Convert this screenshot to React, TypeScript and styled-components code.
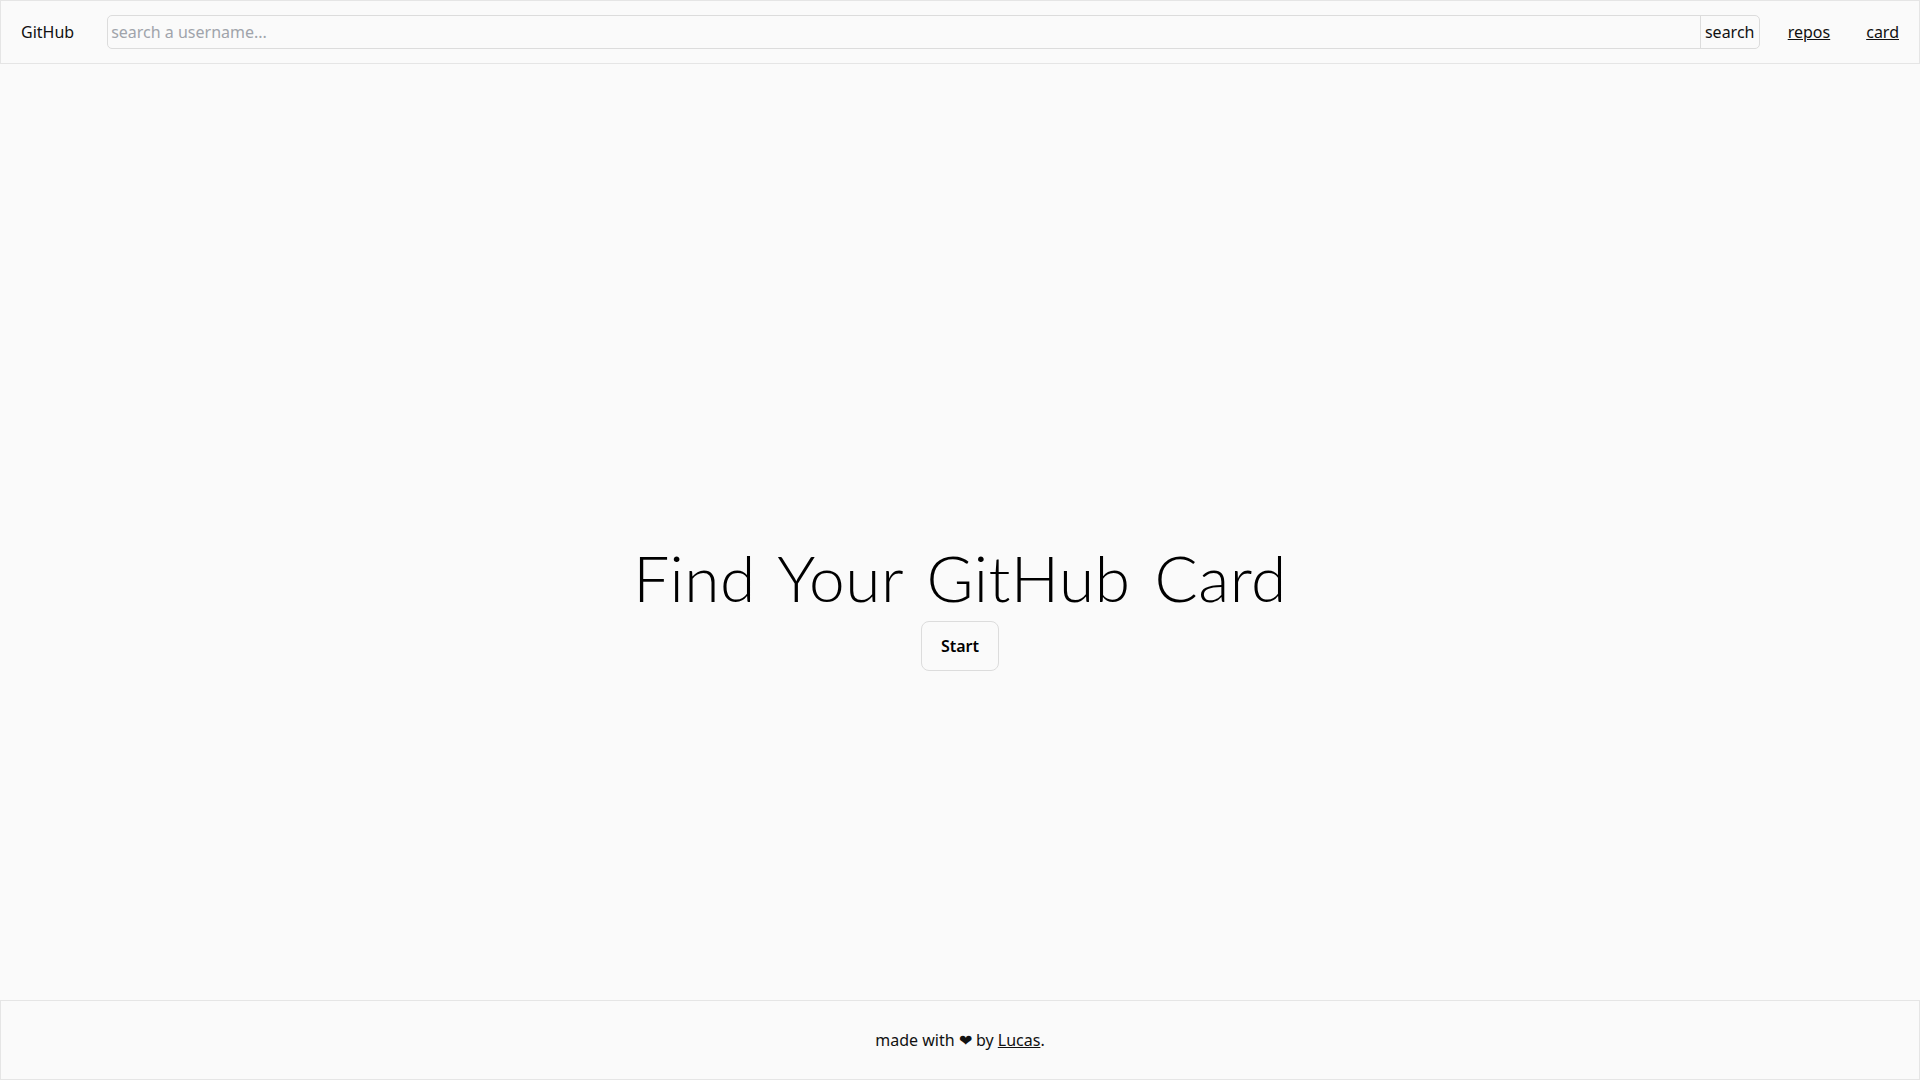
import React, { useState } from 'react';
import styled, { createGlobalStyle } from 'styled-components';

const GlobalStyle = createGlobalStyle`
  html, body {
    margin: 0;
    padding: 0;
    background: #fafafa;
    font-family: 'Noto Sans', 'Open Sans', sans-serif;
    color: #111;
  }
  * {
    box-sizing: border-box;
  }
`;

const Page = styled.div`
  display: flex;
  flex-direction: column;
  min-height: 100vh;
`;

const Header = styled.header`
  display: flex;
  align-items: center;
  height: 64px;
  padding: 0 20px;
  border: 1px solid #e5e5e5;
`;

const Brand = styled.span`
  font-size: 16px;
  margin-right: 33px;
`;

const SearchForm = styled.form`
  flex: 1;
  display: flex;
  height: 34px;
  border: 1px solid #dcdcdc;
  border-radius: 5px;
  overflow: hidden;
`;

const SearchInput = styled.input`
  flex: 1;
  border: none;
  background: transparent;
  padding: 0 3px;
  font-family: inherit;
  font-size: 16px;
  color: #111;
  outline: none;

  &::placeholder {
    color: #a0a4ab;
  }
`;

const SearchButton = styled.button`
  width: 59px;
  border: none;
  border-left: 1px solid #dcdcdc;
  background: transparent;
  font-family: inherit;
  font-size: 16px;
  color: #111;
  padding: 0;
  cursor: pointer;
`;

const NavLink = styled.a<{ $gap: number }>`
  margin-left: ${(p) => p.$gap}px;
  font-size: 16px;
  color: #111;
  text-decoration: underline;
  cursor: pointer;
`;

const Main = styled.main`
  flex: 1;
  display: flex;
  flex-direction: column;
  align-items: center;
  justify-content: center;
  padding-top: 147px;
`;

const Title = styled.h1`
  margin: 0;
  font-family: 'Lato', sans-serif;
  font-weight: 300;
  font-size: 64px;
  line-height: 1.2;
  letter-spacing: 0.5px;
  word-spacing: 6px;
  color: #000;
`;

const StartButton = styled.button`
  margin-top: 5px;
  width: 78px;
  height: 50px;
  border: 1px solid #dcdcdc;
  border-radius: 8px;
  background: #fafafa;
  font-family: 'Noto Sans', sans-serif;
  font-weight: 600;
  font-size: 16px;
  color: #000;
  cursor: pointer;
`;

const Footer = styled.footer`
  display: flex;
  align-items: center;
  justify-content: center;
  height: 80px;
  border: 1px solid #e5e5e5;
  font-size: 16px;
`;

const Author = styled.a`
  color: #111;
  text-decoration: underline;
`;

export default function App() {
  const [username, setUsername] = useState('');

  return (
    <Page>
      <GlobalStyle />
      <Header>
        <Brand>GitHub</Brand>
        <SearchForm onSubmit={(e) => e.preventDefault()}>
          <SearchInput
            placeholder="search a username..."
            value={username}
            onChange={(e) => setUsername(e.target.value)}
          />
          <SearchButton type="submit">search</SearchButton>
        </SearchForm>
        <NavLink $gap={28}>repos</NavLink>
        <NavLink $gap={36}>card</NavLink>
      </Header>
      <Main>
        <Title>Find Your GitHub Card</Title>
        <StartButton>Start</StartButton>
      </Main>
      <Footer>
        <span>
          made with ❤ by <Author>Lucas</Author>.
        </span>
      </Footer>
    </Page>
  );
}
